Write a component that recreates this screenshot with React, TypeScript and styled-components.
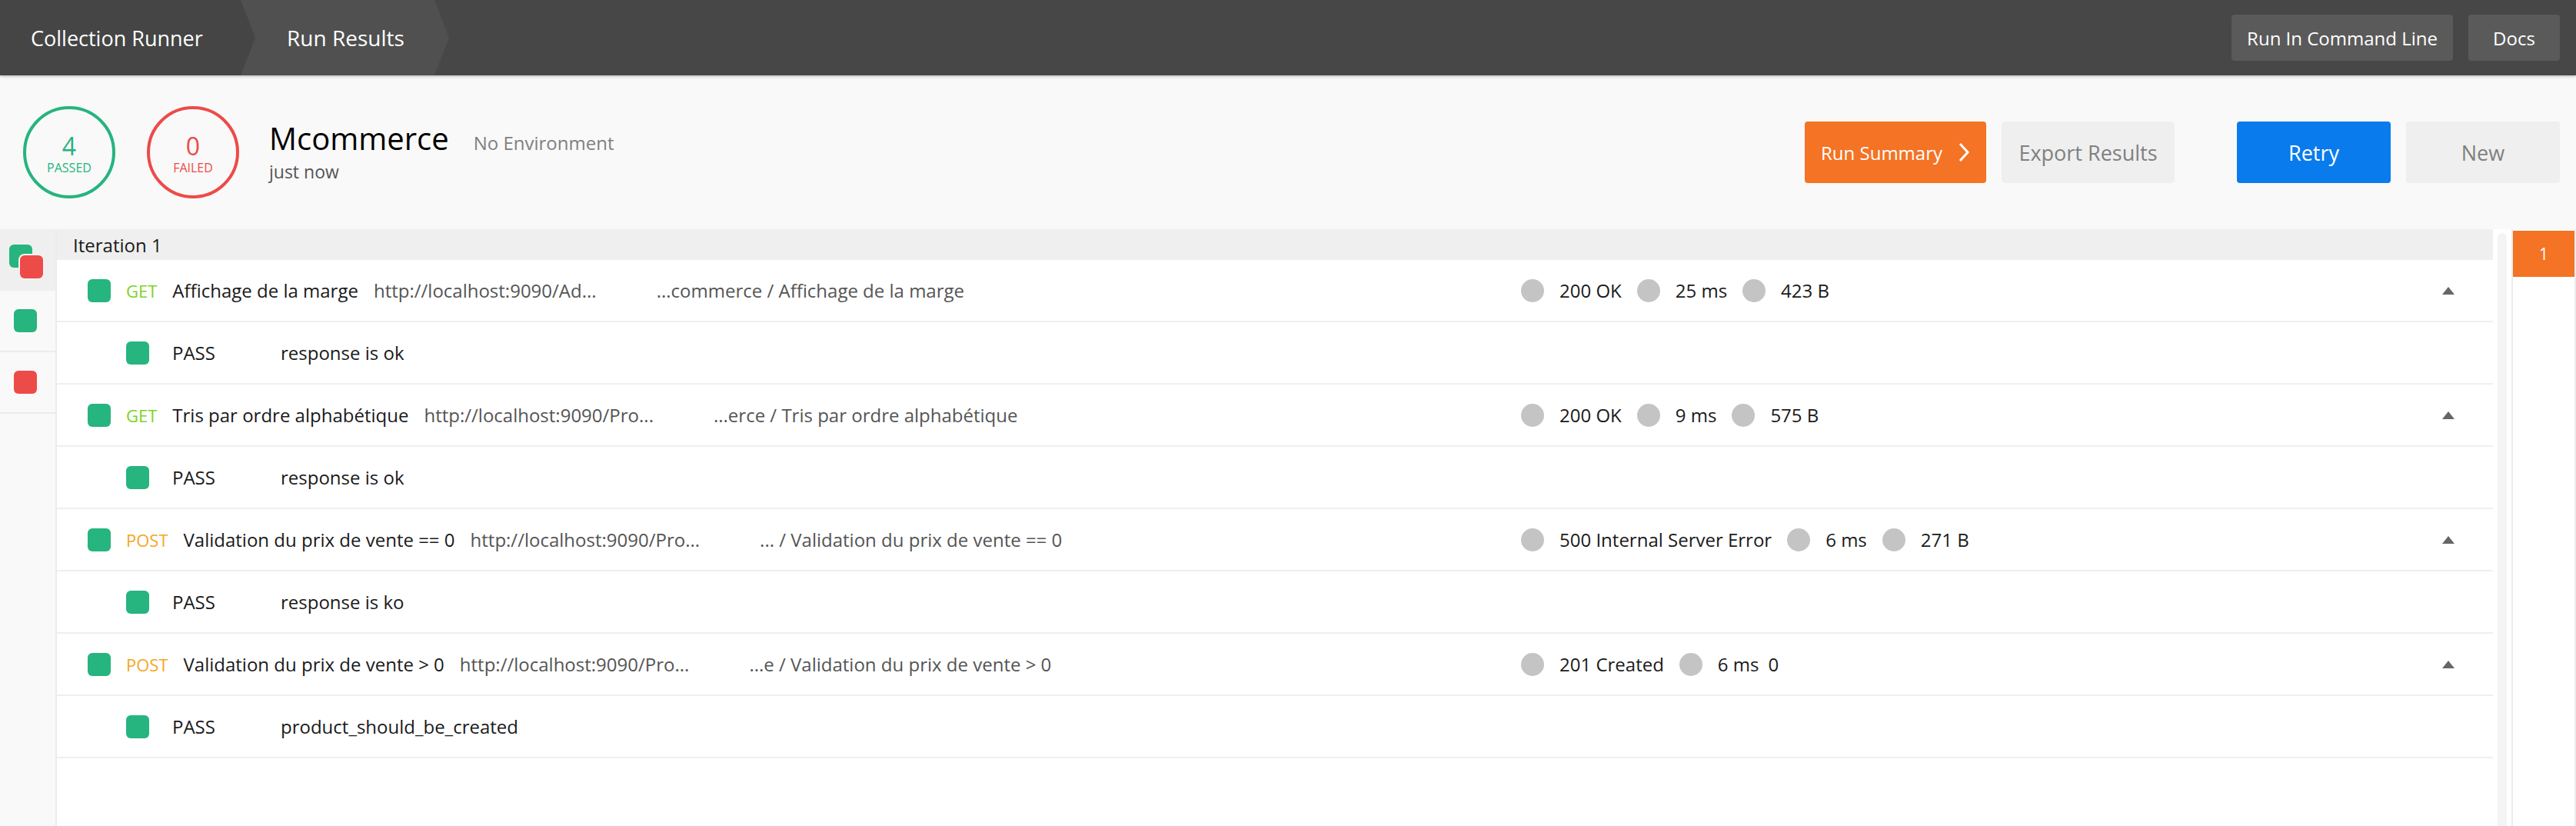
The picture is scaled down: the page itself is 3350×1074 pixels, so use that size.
import styled, { createGlobalStyle } from "styled-components";

const GlobalStyle = createGlobalStyle`
    html, body, #root {
        height: 100%;
        margin: 0;
        padding: 0;
    }
    body {
        background: #f9f9f9;
        font-family: "Open Sans", "Liberation Sans", sans-serif;
        color: #1a1a1a;
    }
    * {
        box-sizing: border-box;
    }
`;

type Request = {
    method: "GET" | "POST";
    name: string;
    url: string;
    path: string;
    status: string;
    time: string;
    size: string;
    sizeDot: boolean;
    test: string;
};

const requests: Request[] = [
    {
        method: "GET",
        name: "Affichage de la marge",
        url: "http://localhost:9090/Ad...",
        path: "...commerce / Affichage de la marge",
        status: "200 OK",
        time: "25 ms",
        size: "423 B",
        sizeDot: true,
        test: "response is ok",
    },
    {
        method: "GET",
        name: "Tris par ordre alphabétique",
        url: "http://localhost:9090/Pro...",
        path: "...erce / Tris par ordre alphabétique",
        status: "200 OK",
        time: "9 ms",
        size: "575 B",
        sizeDot: true,
        test: "response is ok",
    },
    {
        method: "POST",
        name: "Validation du prix de vente == 0",
        url: "http://localhost:9090/Pro...",
        path: "... / Validation du prix de vente == 0",
        status: "500 Internal Server Error",
        time: "6 ms",
        size: "271 B",
        sizeDot: true,
        test: "response is ko",
    },
    {
        method: "POST",
        name: "Validation du prix de vente > 0",
        url: "http://localhost:9090/Pro...",
        path: "...e / Validation du prix de vente > 0",
        status: "201 Created",
        time: "6 ms",
        size: "0",
        sizeDot: false,
        test: "product_should_be_created",
    },
];

const Page = styled.div`
    display: flex;
    flex-direction: column;
    height: 100vh;
    overflow: hidden;
`;

/* top bar */

const TopBar = styled.header`
    position: relative;
    z-index: 2;
    display: flex;
    flex: 0 0 98px;
    align-items: center;
    background: #474747;
    box-shadow: 0 1px 4px rgba(0, 0, 0, 0.3);
    padding-right: 21px;
`;

const Crumb = styled.div<{ $active?: boolean }>`
    display: flex;
    align-items: center;
    height: 100%;
    color: #fff;
    background: ${(p) => (p.$active ? "#505050" : "#454545")};
    ${(p) =>
        p.$active
            ? `
        width: 271px;
        margin-left: -19px;
        padding-left: 60px;
        font-size: 28px;
        clip-path: polygon(0 0, calc(100% - 19px) 0, 100% 50%, calc(100% - 19px) 100%, 0 100%, 19px 50%);
    `
            : `
        width: 332px;
        padding-left: 40px;
        font-size: 27px;
        clip-path: polygon(0 0, calc(100% - 19px) 0, 100% 50%, calc(100% - 19px) 100%, 0 100%);
    `}
`;

const TopActions = styled.div`
    display: flex;
    gap: 20px;
    margin-left: auto;
`;

const TopButton = styled.div`
    display: flex;
    align-items: center;
    justify-content: center;
    height: 60px;
    min-width: 119px;
    padding: 0 20px;
    border-radius: 4px;
    background: #5a5a5a;
    color: #fff;
    font-size: 24px;
`;

/* summary */

const Summary = styled.section`
    display: flex;
    flex: 0 0 200px;
    align-items: center;
    padding: 0 21px 0 30px;
    background: #f9f9f9;
`;

const Badge = styled.div<{ $color: string }>`
    display: flex;
    flex-direction: column;
    align-items: center;
    justify-content: center;
    width: 120px;
    height: 120px;
    margin-right: 41px;
    border: 4px solid ${(p) => p.$color};
    border-radius: 50%;
    color: ${(p) => p.$color};
`;

const BadgeCount = styled.div`
    font-size: 32px;
    line-height: 36px;
    margin-top: 4px;
`;

const BadgeLabel = styled.div`
    font-size: 16px;
    line-height: 20px;
`;

const RunInfo = styled.div`
    display: flex;
    flex-direction: column;
    margin-left: -2px;
`;

const RunTitle = styled.div`
    display: flex;
    align-items: baseline;
    gap: 32px;
`;

const CollectionName = styled.span`
    font-size: 40px;
    line-height: 46px;
    color: #000;
`;

const EnvName = styled.span`
    font-size: 24px;
    color: #808080;
`;

const RunTime = styled.span`
    margin-top: 4px;
    font-size: 23px;
    line-height: 32px;
    color: #555;
`;

const ActionGroup = styled.div<{ $push?: boolean }>`
    display: flex;
    gap: 20px;
    margin-left: ${(p) => (p.$push ? "auto" : "81px")};
`;

const ActionButton = styled.div<{ $variant: "orange" | "blue" | "plain"; $width: number }>`
    display: flex;
    align-items: center;
    justify-content: center;
    gap: 20px;
    width: ${(p) => p.$width}px;
    height: 80px;
    border-radius: 4px;
    font-size: 27px;
    background: ${(p) =>
        p.$variant === "orange" ? "#f47324" : p.$variant === "blue" ? "#097bed" : "#efefef"};
    color: ${(p) => (p.$variant === "plain" ? "#808080" : "#fff")};
`;

const SummaryLabel = styled.span`
    font-size: 24px;
`;

/* results */

const Results = styled.div`
    display: flex;
    flex: 1;
    min-height: 0;
`;

const Sidebar = styled.nav`
    display: flex;
    flex-direction: column;
    flex: 0 0 74px;
    border-right: 2px solid #ececec;
    background: #f9f9f9;
`;

const SideItem = styled.div<{ $active?: boolean }>`
    position: relative;
    display: flex;
    align-items: center;
    height: 80px;
    padding-left: 18px;
    border-bottom: 2px solid ${(p) => (p.$active ? "#efefef" : "#ececec")};
    background: ${(p) => (p.$active ? "#efefef" : "#f9f9f9")};
`;

const Square = styled.span<{ $color: string }>`
    display: block;
    flex: 0 0 30px;
    width: 30px;
    height: 30px;
    border-radius: 6px;
    background: ${(p) => p.$color};
`;

const StackBack = styled(Square)`
    position: absolute;
    left: 12px;
    top: 20px;
`;

const StackFront = styled(Square)`
    position: absolute;
    left: 26px;
    top: 34px;
    box-shadow: 0 0 0 2px #f2f2f2;
`;

const ListColumn = styled.div`
    display: flex;
    flex-direction: column;
    flex: 1;
    background: #fff;
`;

const IterationHeader = styled.div`
    display: flex;
    align-items: center;
    flex: 0 0 40px;
    padding-left: 21px;
    background: #efefef;
    font-size: 24px;
    color: #1a1a1a;
`;

const Row = styled.div`
    display: flex;
    align-items: center;
    flex: 0 0 81px;
    border-bottom: 2px solid #efefef;
    font-size: 24px;
    white-space: nowrap;
`;

const RequestRow = styled(Row)`
    padding: 0 50px 0 40px;
`;

const TestRow = styled(Row)`
    padding-left: 90px;
`;

const RequestMain = styled.div`
    display: flex;
    align-items: center;
    gap: 20px;
    flex: 0 0 1864px;
`;

const Method = styled.span<{ $method: string }>`
    font-size: 22px;
    color: ${(p) => (p.$method === "GET" ? "#7ed321" : "#f5a623")};
`;

const RequestName = styled.span`
    color: #1a1a1a;
`;

const Url = styled.span`
    color: #555;
`;

const PathName = styled.span`
    margin-left: 58px;
    color: #555;
`;

const Stats = styled.div`
    display: flex;
    align-items: center;
    gap: 20px;
`;

const Dot = styled.span`
    display: block;
    width: 30px;
    height: 30px;
    border-radius: 50%;
    background: #c4c4c4;
`;

const SizeNoDot = styled.span`
    margin-left: -8px;
`;

const Caret = styled.svg`
    margin-left: auto;
`;

const TestStatus = styled.span`
    width: 141px;
    margin-left: 30px;
`;

const Filler = styled.div`
    flex: 1;
`;

const ScrollStrip = styled.div`
    display: flex;
    flex: 0 0 24px;
    padding: 5px 6px 0;
    background: #fff;
`;

const ScrollTrack = styled.div`
    flex: 1;
    border-radius: 6px 6px 0 0;
    background: #f4f4f4;
`;

const MiniMap = styled.aside`
    display: flex;
    flex-direction: column;
    flex: 0 0 84px;
    padding-top: 2px;
    border-left: 2px solid #ececec;
    border-right: 2px solid #ececec;
    background: #fff;
`;

const MiniIteration = styled.div`
    display: flex;
    align-items: center;
    justify-content: center;
    height: 60px;
    background: #f47324;
    color: #fff;
    font-size: 21px;
`;

function ChevronRight() {
    return (
        <svg width="16" height="26" viewBox="0 0 16 26">
            <polyline points="3,2 13,13 3,24" fill="none" stroke="#fff" strokeWidth="3" />
        </svg>
    );
}

function App() {
    return (
        <Page>
            <GlobalStyle />
            <TopBar>
                <Crumb>Collection Runner</Crumb>
                <Crumb $active>Run Results</Crumb>
                <TopActions>
                    <TopButton>Run In Command Line</TopButton>
                    <TopButton>Docs</TopButton>
                </TopActions>
            </TopBar>

            <Summary>
                <Badge $color="#26b47f">
                    <BadgeCount>4</BadgeCount>
                    <BadgeLabel>PASSED</BadgeLabel>
                </Badge>
                <Badge $color="#ed4b48">
                    <BadgeCount>0</BadgeCount>
                    <BadgeLabel>FAILED</BadgeLabel>
                </Badge>
                <RunInfo>
                    <RunTitle>
                        <CollectionName>Mcommerce</CollectionName>
                        <EnvName>No Environment</EnvName>
                    </RunTitle>
                    <RunTime>just now</RunTime>
                </RunInfo>
                <ActionGroup $push>
                    <ActionButton $variant="orange" $width={236}>
                        <SummaryLabel>Run Summary</SummaryLabel>
                        <ChevronRight />
                    </ActionButton>
                    <ActionButton $variant="plain" $width={225}>Export Results</ActionButton>
                </ActionGroup>
                <ActionGroup>
                    <ActionButton $variant="blue" $width={200}>Retry</ActionButton>
                    <ActionButton $variant="plain" $width={200}>New</ActionButton>
                </ActionGroup>
            </Summary>

            <Results>
                <Sidebar>
                    <SideItem $active>
                        <StackBack $color="#26b47f" />
                        <StackFront $color="#ed4b48" />
                    </SideItem>
                    <SideItem>
                        <Square $color="#26b47f" />
                    </SideItem>
                    <SideItem>
                        <Square $color="#ed4b48" />
                    </SideItem>
                </Sidebar>

                <ListColumn>
                    <IterationHeader>Iteration 1</IterationHeader>
                    {requests.map((r) => (
                        <div key={r.name} style={{ display: "contents" }}>
                            <RequestRow>
                                <RequestMain>
                                    <Square $color="#26b47f" />
                                    <Method $method={r.method}>{r.method}</Method>
                                    <RequestName>{r.name}</RequestName>
                                    <Url>{r.url}</Url>
                                    <PathName>{r.path}</PathName>
                                </RequestMain>
                                <Stats>
                                    <Dot />
                                    <span>{r.status}</span>
                                    <Dot />
                                    <span>{r.time}</span>
                                    {r.sizeDot ? <Dot /> : null}
                                    {r.sizeDot ? <span>{r.size}</span> : <SizeNoDot>{r.size}</SizeNoDot>}
                                </Stats>
                                <Caret width="16" height="10" viewBox="0 0 16 10">
                                    <polygon points="8,0 16,10 0,10" fill="#666" />
                                </Caret>
                            </RequestRow>
                            <TestRow>
                                <Square $color="#26b47f" />
                                <TestStatus>PASS</TestStatus>
                                <span>{r.test}</span>
                            </TestRow>
                        </div>
                    ))}
                    <Filler />
                </ListColumn>

                <ScrollStrip>
                    <ScrollTrack />
                </ScrollStrip>

                <MiniMap>
                    <MiniIteration>1</MiniIteration>
                </MiniMap>
            </Results>
        </Page>
    );
}

export default App;
